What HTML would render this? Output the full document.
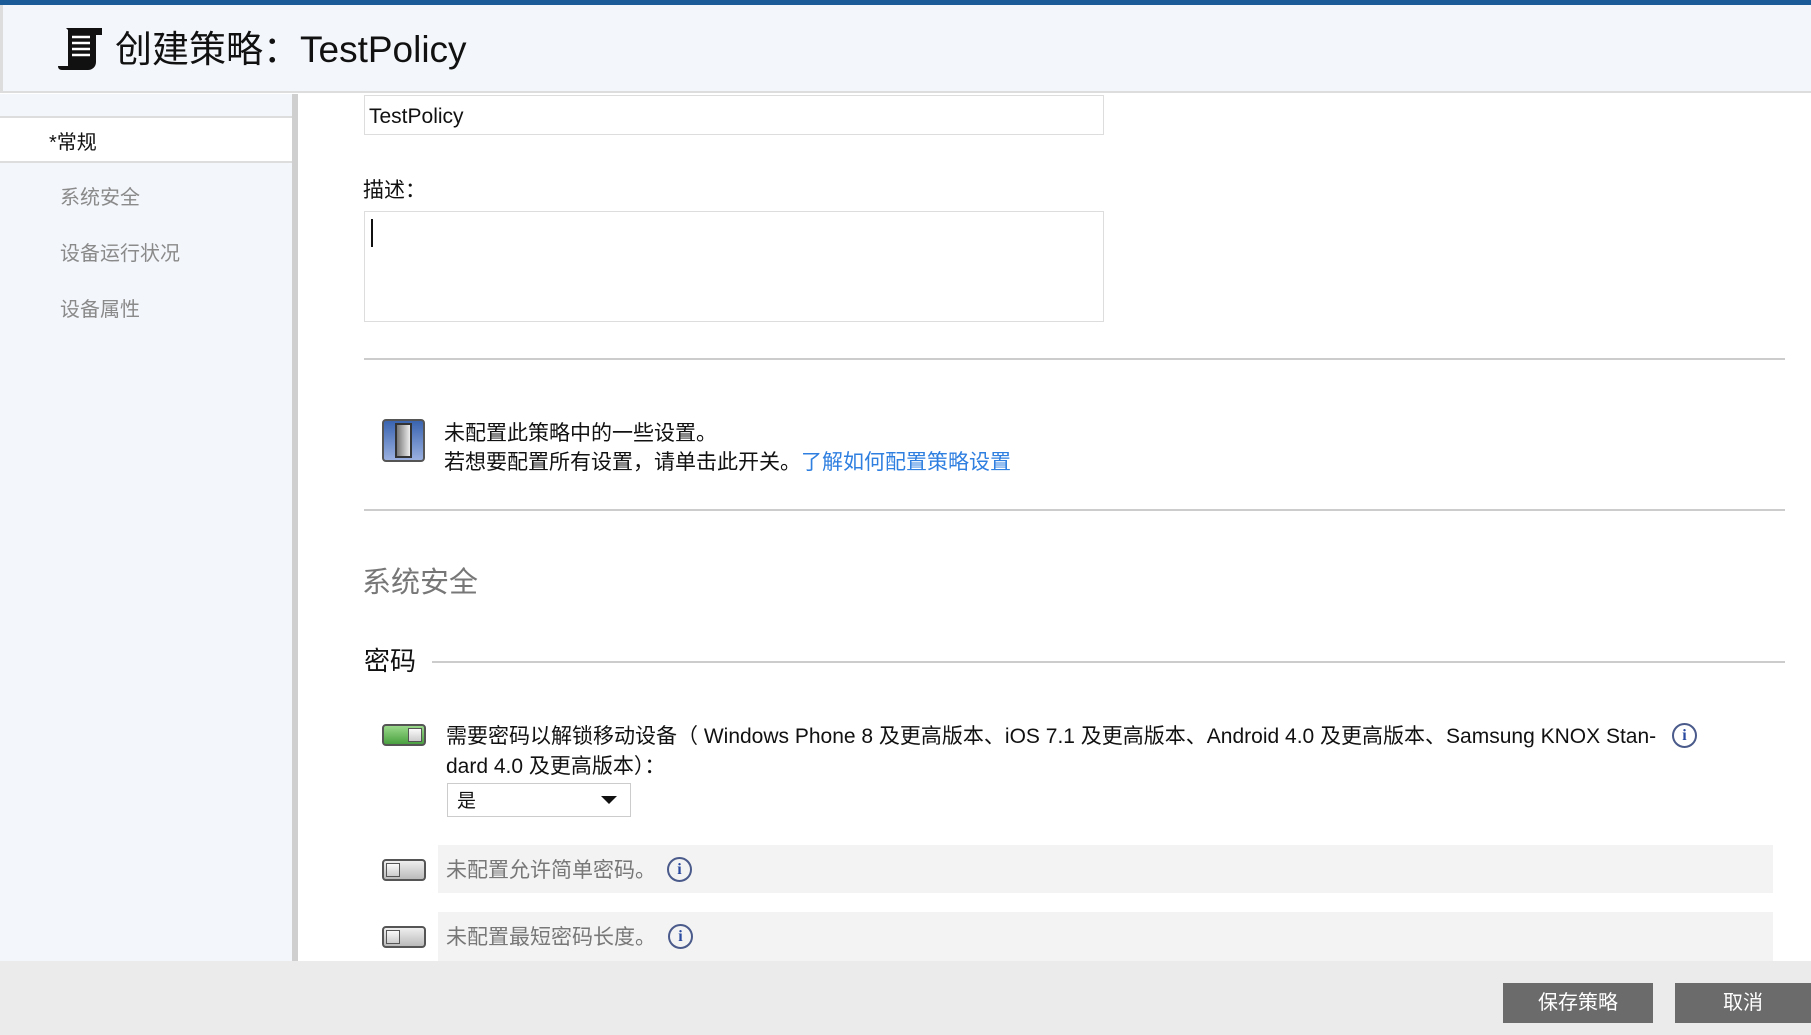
<!DOCTYPE html>
<html><head><meta charset="utf-8"><style>
*{margin:0;padding:0;box-sizing:border-box}
body{width:1811px;height:1035px;overflow:hidden;background:#fff;font-family:"Liberation Sans","Noto Sans CJK SC",sans-serif;color:#111;position:relative}
.a{position:absolute}
.t{position:absolute;white-space:nowrap;line-height:1}
.info{position:absolute;width:25px;height:25px;border:2px solid #4a5a8a;border-radius:50%;color:#2a4aa0;font:bold 16px "Liberation Serif",serif;text-align:center;line-height:21px}
.tog{position:absolute;width:44px;height:22px;border:2px solid #555;border-radius:4px;background:linear-gradient(#eee,#bbb)}
.tog i{position:absolute;top:2px;width:14px;height:14px;border:1px solid #555;background:linear-gradient(#fafafa,#ccc)}
.btn{position:absolute;background:#6b6b6b;color:#fff;font-size:20px;text-align:center;line-height:40px}
</style></head><body>
<div class="a" style="left:0;top:0;width:1811px;height:5px;background:#1b5b98"></div>
<div class="a" style="left:0;top:5px;width:1811px;height:88px;background:#f3f6fb;border-bottom:2px solid #ddd;border-left:3px solid #ddd"></div>
<svg class="a" style="left:58px;top:26px" width="48" height="46" viewBox="0 0 48 46"><path d="M8 2h30v34c0 5-4 8-8 8H4c-3 0-4-2-4-4h10V4z" fill="#111"/><rect x="38" y="2" width="6" height="7" fill="#111"/><g stroke="#fff" stroke-width="2.5"><line x1="14" y1="11" x2="32" y2="11"/><line x1="14" y1="17" x2="32" y2="17"/><line x1="14" y1="23" x2="32" y2="23"/><line x1="14" y1="29" x2="32" y2="29"/></g></svg>
<div class="t" style="left:115px;top:31px;font-size:37px;color:#111">创建策略：TestPolicy</div>
<div class="a" style="left:0;top:94px;width:292px;height:867px;background:#f3f6fb"></div>
<div class="a" style="left:292px;top:94px;width:6px;height:867px;background:#cfcfcf"></div>
<div class="a" style="left:0;top:116px;width:292px;height:47px;background:#fff;border-top:2px solid #ddd;border-bottom:2px solid #ddd"></div>
<div class="t" style="left:49px;top:133px;font-size:20px">*常规</div>
<div class="t" style="left:60px;top:188px;font-size:20px;color:#8a8a8a">系统安全</div>
<div class="t" style="left:60px;top:244px;font-size:20px;color:#8a8a8a">设备运行状况</div>
<div class="t" style="left:60px;top:300px;font-size:20px;color:#8a8a8a">设备属性</div>

<div class="a" style="left:364px;top:95px;width:740px;height:40px;border:1px solid #ddd"></div>
<div class="t" style="left:369px;top:106px;font-size:21px">TestPolicy</div>
<div class="t" style="left:363px;top:180px;font-size:21px">描述：</div>
<div class="a" style="left:364px;top:211px;width:740px;height:111px;border:1px solid #ddd"></div>
<div class="a" style="left:371px;top:219px;width:2px;height:28px;background:#111"></div>
<div class="a" style="left:364px;top:358px;width:1421px;height:2px;background:#ccc"></div>
<div class="a" style="left:382px;top:419px;width:43px;height:43px;border:2px solid #555;border-radius:4px;background:linear-gradient(#3a64b0,#9ab0e0)"><div class="a" style="left:11px;top:2px;width:17px;height:35px;border:2px solid #333;background:linear-gradient(90deg,#777,#eee)"></div></div>
<div class="t" style="left:444px;top:423px;font-size:21px">未配置此策略中的一些设置。</div>
<div class="t" style="left:444px;top:452px;font-size:21px">若想要配置所有设置，请单击此开关。<span style="color:#2f7fe0">了解如何配置策略设置</span></div>
<div class="a" style="left:364px;top:509px;width:1421px;height:2px;background:#ccc"></div>
<div class="t" style="left:362px;top:569px;font-size:29px;color:#777">系统安全</div>
<div class="t" style="left:364px;top:648px;font-size:26px">密码</div>
<div class="a" style="left:432px;top:661px;width:1353px;height:2px;background:#ccc"></div>
<div class="tog" style="left:382px;top:724px;background:linear-gradient(#9ad98a,#4aa040)"><i style="right:2px"></i></div>
<div class="t" style="left:446px;top:726px;font-size:21px">需要密码以解锁移动设备（ Windows Phone 8 及更高版本、iOS 7.1 及更高版本、Android 4.0 及更高版本、Samsung KNOX Stan-</div>
<div class="t" style="left:446px;top:756px;font-size:21px">dard 4.0 及更高版本）：</div>
<div class="info" style="left:1672px;top:723px">i</div>
<div class="a" style="left:447px;top:783px;width:184px;height:34px;border:1px solid #ccc"></div>
<div class="t" style="left:457px;top:792px;font-size:19px">是</div>
<div class="a" style="left:601px;top:796px;border-left:8px solid transparent;border-right:8px solid transparent;border-top:8px solid #111"></div>
<div class="a" style="left:438px;top:845px;width:1335px;height:48px;background:#f3f3f3"></div>
<div class="a" style="left:438px;top:912px;width:1335px;height:49px;background:#f3f3f3"></div>
<div class="tog" style="left:382px;top:859px"><i style="left:2px"></i></div>
<div class="tog" style="left:382px;top:926px"><i style="left:2px"></i></div>
<div class="t" style="left:446px;top:860px;font-size:21px;color:#777">未配置允许简单密码。</div>
<div class="t" style="left:446px;top:927px;font-size:21px;color:#777">未配置最短密码长度。</div>
<div class="info" style="left:667px;top:857px">i</div>
<div class="info" style="left:668px;top:924px">i</div>
<div class="a" style="left:0;top:961px;width:1811px;height:74px;background:#ebebeb"></div>
<div class="btn" style="left:1503px;top:983px;width:150px;height:40px">保存策略</div>
<div class="btn" style="left:1675px;top:983px;width:136px;height:40px">取消</div>
</body></html>
